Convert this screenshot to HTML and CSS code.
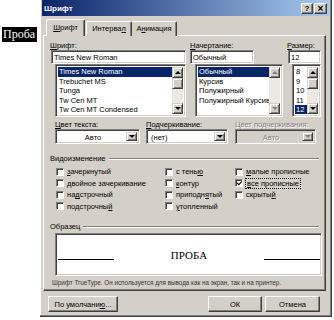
FILE: index.html
```html
<!DOCTYPE html>
<html lang="ru">
<head>
  <meta charset="UTF-8" />
  <title>Шрифт</title>
  <link rel="stylesheet" href="styles.css">
</head>
<body>
  <div class="page">
    <div class="side"><span class="sample-word">Проба</span></div>

    <div class="dialog">
      <div class="titlebar">
        <span class="title">Шрифт</span>
        <div class="cap-btns">
          <span class="cap-btn">?</span>
          <span class="cap-btn close">×</span>
        </div>
      </div>

      <div class="tabs">
        <div class="tab active"><u>Ш</u>рифт</div>
        <div class="tab">Интерва<u>л</u></div>
        <div class="tab">А<u>н</u>имация</div>
      </div>

      <div class="panel">
        <div class="pickers">
          <div class="picker p-font">
            <div class="lbl"><u>Ш</u>рифт:</div>
            <div class="field">Times New Roman</div>
            <div class="list">
              <ul>
                <li class="sel">Times New Roman</li>
                <li>Trebuchet MS</li>
                <li>Tunga</li>
                <li>Tw Cen MT</li>
                <li>Tw Cen MT Condensed</li>
              </ul>
              <div class="vscroll">
                <span class="sbtn up"></span>
                <span class="thumb"></span>
                <span class="track"></span>
                <span class="sbtn down"></span>
              </div>
            </div>
          </div>

          <div class="picker p-style">
            <div class="lbl"><u>Н</u>ачертание:</div>
            <div class="field">Обычный</div>
            <div class="list">
              <ul>
                <li class="sel">Обычный</li>
                <li>Курсив</li>
                <li>Полужирный</li>
                <li>Полужирный Курсив</li>
              </ul>
              <div class="vscroll off">
                <span class="sbtn up"></span>
                <span class="track"></span>
                <span class="sbtn down"></span>
              </div>
            </div>
          </div>

          <div class="picker p-size">
            <div class="lbl"><u>Р</u>азмер:</div>
            <div class="field">12</div>
            <div class="list">
              <ul>
                <li>8</li>
                <li>9</li>
                <li>10</li>
                <li>11</li>
                <li class="sel">12</li>
              </ul>
              <div class="vscroll">
                <span class="sbtn up"></span>
                <span class="thumb"></span>
                <span class="track"></span>
                <span class="sbtn down"></span>
              </div>
            </div>
          </div>
        </div>

        <div class="colors">
          <div class="combo-col c1">
            <div class="lbl"><u>Ц</u>вет текста:</div>
            <div class="combo"><span class="val center">Авто</span><span class="dbtn"></span></div>
          </div>
          <div class="combo-col c2">
            <div class="lbl"><u>П</u>одчеркивание:</div>
            <div class="combo"><span class="val">(нет)</span><span class="dbtn"></span></div>
          </div>
          <div class="combo-col c3 disabled">
            <div class="lbl">Цвет подчеркивания:</div>
            <div class="combo"><span class="val center">Авто</span><span class="dbtn"></span></div>
          </div>
        </div>

        <div class="group-head g-effects"><span>Видоизменение</span><i class="rule"></i></div>
        <div class="effects">
          <div class="ecol e1">
            <div class="chk"><span class="box"></span><span><u>з</u>ачеркнутый</span></div>
            <div class="chk"><span class="box"></span><span>двойное зачеркивание</span></div>
            <div class="chk"><span class="box"></span><span>на<u>д</u>строчный</span></div>
            <div class="chk"><span class="box"></span><span>подстрочны<u>й</u></span></div>
          </div>
          <div class="ecol e2">
            <div class="chk"><span class="box"></span><span>с тень<u>ю</u></span></div>
            <div class="chk"><span class="box"></span><span><u>к</u>онтур</span></div>
            <div class="chk"><span class="box"></span><span>приподн<u>я</u>тый</span></div>
            <div class="chk"><span class="box"></span><span><u>у</u>топленный</span></div>
          </div>
          <div class="ecol e3">
            <div class="chk"><span class="box"></span><span><u>м</u>алые прописные</span></div>
            <div class="chk"><span class="box checked"></span><span class="focus"><u>в</u>се прописные</span></div>
            <div class="chk"><span class="box"></span><span>скрыты<u>й</u></span></div>
          </div>
        </div>

        <div class="group-head g-sample"><span>Образец</span><i class="rule"></i></div>
        <div class="preview">
          <i class="pline left"></i>
          <span class="ptext">ПРОБА</span>
          <i class="pline right"></i>
        </div>
        <div class="info">Шрифт TrueType. Он используется для вывода как на экран, так и на принтер.</div>
      </div>

      <div class="footer">
        <span class="btn b-default">По умолчани<u>ю</u>...</span>
        <span class="btn b-ok">ОК</span>
        <span class="btn b-cancel">Отмена</span>
      </div>
    </div>
  </div>
</body>
</html>
```

FILE: styles.css
```css
* { box-sizing: border-box; }
body { margin: 0; background: #fff; font-family: "Liberation Sans", Arial, sans-serif; font-size: 7.5px; color: #000; }
ul { list-style: none; margin: 0; padding: 0; }
u { text-decoration: underline; text-underline-offset: 1px; }

.page { display: flex; height: 320px; }
.side { width: 40px; padding: 27px 0 0 2px; }
.sample-word { display: block; width: 35px; height: 15px; background: #000; color: #fff; font-family: "Liberation Serif", serif; font-size: 12px; line-height: 15px; padding-left: 1px; }

/* dialog frame */
.dialog { width: 292px; height: 317px; background: #d4d0c8; padding: 0 2px; border-right: 1px solid #404040; border-bottom: 1px solid #404040; box-shadow: inset -1px -1px #808080, inset 1px 0 #fff; display: flex; flex-direction: column; }
.titlebar { height: 16px; display: flex; align-items: center; justify-content: space-between; padding: 0 2px 0 2px; background: linear-gradient(to right, #0a246a, #a6caf0); }
.title { color: #fff; font-weight: bold; font-size: 8px; }
.cap-btns { display: flex; gap: 1px; }
.cap-btn { width: 12px; height: 11px; background: #d4d0c8; border: 1px solid; border-color: #fff #404040 #404040 #fff; box-shadow: inset -1px -1px #808080; font-weight: bold; font-size: 8px; line-height: 9px; text-align: center; }
.cap-btn.close { width: 13px; font-size: 10px; }

/* tabs */
.tabs { display: flex; align-items: flex-end; height: 19px; padding-left: 4px; position: relative; z-index: 1; }
.tab { height: 15px; margin-bottom: -1px; background: #d4d0c8; border: 1px solid; border-bottom: 0; border-color: #fff #404040 transparent #fff; box-shadow: inset -1px 0 #808080; border-radius: 2px 2px 0 0; text-align: center; line-height: 13px; }
.tab:nth-child(2) { width: 46px; margin-left: 1px; }
.tab:nth-child(3) { width: 45px; border-left: 0; }
.tab.active { width: 39px; height: 17px; line-height: 15px; padding-bottom: 1px; }

.panel { margin: 0 3px 0 1px; height: 256px; border: 1px solid; border-color: #fff #404040 #404040 #fff; box-shadow: inset -1px -1px #808080; }

/* sunken widgets */
.field, .list, .combo, .preview { background: #fff; border: 1px solid; border-color: #808080 #fff #fff #808080; box-shadow: inset 1px 1px #404040, inset -1px -1px #d4d0c8; }

.lbl { height: 9px; line-height: 9px; white-space: nowrap; }
.pickers { display: flex; padding: 5px 0 0 6px; gap: 4px; }
.picker { display: flex; flex-direction: column; }
.field { height: 14px; margin-left: 1px; padding: 2px 0 0 2px; line-height: 9px; white-space: nowrap; overflow: hidden; }
.list { height: 53px; margin-left: 5px; padding: 2px; display: flex; }
.list ul { flex: 1; min-width: 0; overflow: hidden; }
.list li { height: 9.6px; line-height: 9.6px; padding-left: 1px; white-space: nowrap; }
.list li.sel { background: #0a246a; color: #fff; }

.p-font { width: 136px; }
.p-font .field { width: 135px; }
.p-font .list { width: 131px; }
.p-style { width: 93px; }
.p-style .field { width: 64px; margin-left: 0; }
.p-style .list { width: 88px; }
.p-size { width: 34px; }
.p-size .field { width: 33px; }
.p-size .list { width: 29px; }

.vscroll { width: 11px; display: flex; flex-direction: column; }
.vscroll .track { flex: 1; background: #ebe9e4; }
.thumb, .sbtn { display: flex; align-items: center; justify-content: center; background: #d4d0c8; border: 1px solid; border-color: #d4d0c8 #404040 #404040 #d4d0c8; box-shadow: inset 1px 1px #fff, inset -1px -1px #808080; }
.sbtn { height: 11px; }
.thumb { height: 11px; }
.sbtn::after { content: ""; border-left: 3px solid transparent; border-right: 3px solid transparent; }
.sbtn.up::after { border-bottom: 3px solid #000; }
.sbtn.down::after { border-top: 3px solid #000; }
.vscroll.off .sbtn.up::after { border-bottom-color: #808080; }
.vscroll.off .sbtn.down::after { border-top-color: #808080; }

/* colour combos */
.colors { display: flex; padding: 3px 0 0 11px; }
.combo-col { display: flex; flex-direction: column; }
.c1 { width: 85px; }
.c2 { width: 82px; margin-left: 6px; }
.c3 { width: 81px; margin-left: 7px; }
.combo { height: 15px; display: flex; padding: 2px; }
.combo .val { flex: 1; line-height: 11px; padding-left: 2px; }
.combo .val.center { text-align: center; }
.dbtn { width: 11px; display: flex; align-items: center; justify-content: center; background: #d4d0c8; border: 1px solid; border-color: #d4d0c8 #404040 #404040 #d4d0c8; box-shadow: inset 1px 1px #fff, inset -1px -1px #808080; }
.dbtn::after { content: ""; border-left: 3px solid transparent; border-right: 3px solid transparent; border-top: 3px solid #000; }
.disabled .lbl, .disabled .val { color: #808080; text-shadow: 1px 1px #fff; }
.disabled .combo { background: #d4d0c8; }
.disabled .dbtn::after { border-top-color: #808080; }

/* group headings */
.group-head { display: flex; align-items: center; gap: 3px; padding: 0 6px 0 6px; height: 9px; line-height: 9px; }
.group-head .rule { flex: 1; height: 2px; border-top: 1px solid #808080; border-bottom: 1px solid #fff; }
.g-effects { margin-top: 10px; }
.g-sample { margin-top: 10px; }

.effects { display: flex; padding: 3px 0 0 12px; }
.ecol { display: flex; flex-direction: column; }
.e1 { width: 109px; }
.e2 { width: 70px; }
.chk { height: 11.5px; display: flex; align-items: center; gap: 3px; white-space: nowrap; }
.box { width: 8px; height: 8px; background: #fff; border: 1px solid; border-color: #808080 #fff #fff #808080; box-shadow: inset 1px 1px #404040; display: flex; align-items: center; justify-content: center; }
.box.checked::after { content: ""; width: 4px; height: 2px; border-left: 1.5px solid #000; border-bottom: 1.5px solid #000; transform: rotate(-45deg); margin-top: -1px; }
.focus { outline: 1px dotted #000; outline-offset: 0; padding: 0 1px; }

/* sample preview */
.preview { height: 43px; margin: 2px 0 0 11px; width: 267px; display: flex; align-items: center; padding: 0 1px 0 2px; }
.pline { width: 56px; height: 1px; background: #000; margin-top: 9px; }
.ptext { flex: 1; text-align: center; font-family: "Liberation Serif", serif; font-size: 11px; }
.info { font-size: 6.3px; padding: 2px 0 0 8px; height: 9px; line-height: 9px; white-space: nowrap; color: #333; }

/* buttons */
.footer { display: flex; padding: 5px 0 0 6px; }
.btn { height: 16px; display: flex; align-items: center; justify-content: center; border: 1px solid; border-color: #fff #404040 #404040 #fff; box-shadow: inset -1px -1px #808080; }
.b-default { width: 70px; }
.b-ok { width: 54px; margin-left: 90px; }
.b-cancel { width: 55px; margin-left: 3px; }
```
